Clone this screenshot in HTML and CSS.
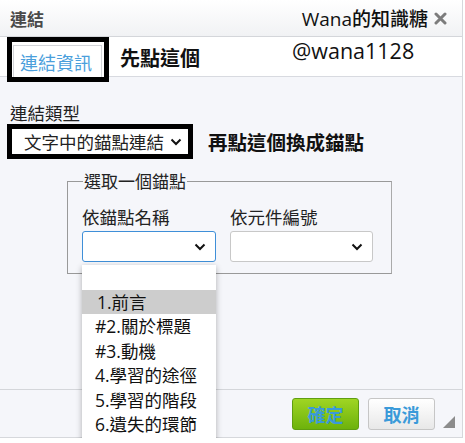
FILE: index.html
```html
<!DOCTYPE html>
<html lang="zh-Hant">
  <head>
    <meta charset="UTF-8" />
    <meta name="viewport" content="width=device-width, initial-scale=1.0" />
    <title>連結</title>
    <link rel="stylesheet" href="styles.css">
  </head>
  <body>
    <div class="dialog">
      <div class="dialogHeader">
        <span class="dialogTitle">連結</span>
        <span class="brand">Wana的知識糖</span>
        <svg class="closeBtn" width="13" height="13" viewBox="0 0 13 13">
          <path d="M2 2l9 9M11 2l-9 9" stroke="#7c7c7c" stroke-width="3" stroke-linecap="round"/>
        </svg>
      </div>

      <div class="tabBar">
        <div class="tabMark">
          <div class="tab">連結資訊</div>
        </div>
        <span class="hint">先點這個</span>
        <span class="handle">@wana1128</span>
      </div>

      <div class="dialogBody">
        <div class="fieldLabel">連結類型</div>
        <div class="typeRow">
          <div class="typeMark">
            <span>文字中的錨點連結</span>
            <svg class="chevron" width="12" height="8" viewBox="0 0 12 8">
              <path d="M1.5 1.5 6 6l4.5-4.5" fill="none" stroke="#111" stroke-width="2"/>
            </svg>
          </div>
          <span class="hint">再點這個換成錨點</span>
        </div>

        <div class="anchorBox">
          <span class="legend">選取一個錨點</span>
          <div class="pickers">
            <div class="picker">
              <div class="pickerLabel">依錨點名稱</div>
              <div class="selectBox focused">
                <svg class="chevron" width="12" height="8" viewBox="0 0 12 8">
                  <path d="M1.5 1.5 6 6l4.5-4.5" fill="none" stroke="#111" stroke-width="2"/>
                </svg>
              </div>
            </div>
            <div class="picker wide">
              <div class="pickerLabel">依元件編號</div>
              <div class="selectBox">
                <svg class="chevron" width="12" height="8" viewBox="0 0 12 8">
                  <path d="M1.5 1.5 6 6l4.5-4.5" fill="none" stroke="#111" stroke-width="2"/>
                </svg>
              </div>
            </div>
          </div>
        </div>
      </div>

      <div class="dialogFooter">
        <button class="okBtn">確定</button>
        <button class="cancelBtn">取消</button>
        <span class="resizer"></span>
      </div>

      <ul class="optionList">
        <li>&nbsp;</li>
        <li class="active">1.前言</li>
        <li>#2.關於標題</li>
        <li>#3.動機</li>
        <li>4.學習的途徑</li>
        <li>5.學習的階段</li>
        <li>6.遺失的環節</li>
      </ul>
    </div>
  </body>
</html>
```

FILE: styles.css
```css
body {
  margin: 0;
  background-color: #ffffff;
  font-family: "Open Sans", "Noto Sans CJK TC", sans-serif;
  overflow: hidden;
}

.dialog {
  position: relative;
  width: 463px;
  height: 438px;
  display: flex;
  flex-direction: column;
  background-color: #f5f6fa;
  border-right: 1px solid #d6d8dc;
  border-bottom: 1px solid #d6d8dc;
  box-sizing: border-box;
}

.dialogHeader {
  height: 37px;
  display: flex;
  align-items: center;
  padding: 0 15px 0 10px;
  background: linear-gradient(#ffffff, #f1f2f4);
  border-bottom: 1px solid #d4d6da;
  box-sizing: border-box;
}

.dialogTitle {
  font-size: 17px;
  font-weight: bold;
  color: #4a4a4a;
  font-family: "Noto Sans CJK TC", sans-serif;
}

.brand {
  margin-left: auto;
  font-size: 19px;
  color: #111;
  font-weight: 500;
}

.closeBtn {
  margin-left: 6px;
}

.tabBar {
  height: 40px;
  display: flex;
  align-items: flex-start;
  padding-left: 7px;
  background-color: #ffffff;
  border-bottom: 1px solid #d8dae0;
  box-sizing: border-box;
}

.tabMark {
  border: 5px solid #000;
  width: 91px;
  height: 32px;
  padding: 3px 0 0 1px;
  box-sizing: content-box;
  background-color: #fff;
}

.tab {
  height: 32px;
  width: 89px;
  border: 1px solid #d2d4d8;
  border-bottom: none;
  color: #4b9fdc;
  font-size: 18px;
  font-family: "Noto Sans CJK TC", sans-serif;
  display: flex;
  align-items: center;
  padding-left: 6px;
  box-sizing: border-box;
}

.hint {
  font-size: 19.5px;
  font-weight: bold;
  color: #111;
  font-family: "Noto Sans CJK TC", sans-serif;
}

.tabBar .hint {
  margin: 6px 0 0 11px;
  font-size: 20px;
}

.handle {
  margin: -1px 0 0 92px;
  font-size: 21.5px;
  color: #111;
}

.dialogBody {
  flex: 1;
  padding: 26px 0 0 10px;
  font-family: "Noto Sans CJK TC", sans-serif;
}

.fieldLabel {
  font-size: 17.5px;
  color: #222;
  line-height: 20px;
}

.typeRow {
  display: flex;
  align-items: center;
  margin-left: -3px;
  margin-top: 1px;
}

.typeMark {
  width: 186px;
  height: 35px;
  border: 5px solid #000;
  display: flex;
  align-items: center;
  padding: 0 6px 0 12px;
  background-color: #fff;
  font-size: 17.5px;
  color: #222;
  box-sizing: border-box;
  justify-content: space-between;
}

.typeRow .hint {
  margin-left: 15px;
}

/* legend sits on the top border line */
.anchorBox {
  margin: 22px 0 0 57px;
  width: 325px;
  height: 93px;
  border: 1px solid #999;
  border-right-color: #aaa;
  padding: 0 0 0 14px;
  box-sizing: border-box;
}

.anchorBox .legend {
  display: inline-block;
  font-size: 17px;
  line-height: 20px;
  color: #222;
  padding: 0 1px;
  margin: -11px 0 0 1px;
  background-color: #f5f6fa;
  vertical-align: top;
}

.pickers {
  display: flex;
  gap: 14px;
  margin-top: 0;
}

.picker {
  width: 134px;
  flex-shrink: 0;
}

.picker.wide {
  width: 143px;
}

.pickerLabel {
  font-size: 17.5px;
  color: #222;
  line-height: 22px;
  margin-bottom: 3px;
}

.selectBox {
  height: 31px;
  border: 1px solid #c8c8c8;
  border-radius: 3px;
  background-color: #fff;
  display: flex;
  align-items: center;
  justify-content: flex-end;
  padding-right: 9px;
  box-sizing: border-box;
}

.selectBox.focused {
  border-color: #3f8fd8;
}

.dialogFooter {
  height: 48px;
  border-top: 1px solid #d4d6da;
  display: flex;
  align-items: center;
  padding: 0 27px 0 0;
  gap: 9px;
  justify-content: flex-end;
  box-sizing: border-box;
  position: relative;
}

.dialogFooter button {
  width: 67px;
  height: 32px;
  border-radius: 3px;
  font-size: 18px;
  font-weight: bold;
  font-family: "Noto Sans CJK TC", sans-serif;
  color: #3a9ad9;
  padding: 0;
}

.okBtn {
  border: 1px solid #5f9e10;
  background: linear-gradient(#9fd523, #6db20c);
}

.cancelBtn {
  border: 1px solid #c6c6c6;
  background: linear-gradient(#ffffff, #e8e8e8);
}

.resizer {
  position: absolute;
  right: 7px;
  bottom: 9px;
  width: 0;
  height: 0;
  border-left: 12px solid transparent;
  border-bottom: 12px solid #8c8c8c;
}

.optionList {
  position: absolute;
  left: 82px;
  top: 265px;
  width: 134px;
  margin: 0;
  padding: 0;
  list-style: none;
  background-color: #fff;
  box-shadow: 0 2px 6px rgba(0, 0, 0, 0.3);
  font-family: "Open Sans", "Noto Sans CJK TC", sans-serif;
  font-size: 17.5px;
  color: #111;
  height: 180px;
}

.optionList li {
  height: 24.5px;
  line-height: 24.5px;
  padding-left: 13px;
}

.optionList li.active {
  background-color: #cdcdcd;
  padding-left: 15px;
}
```
